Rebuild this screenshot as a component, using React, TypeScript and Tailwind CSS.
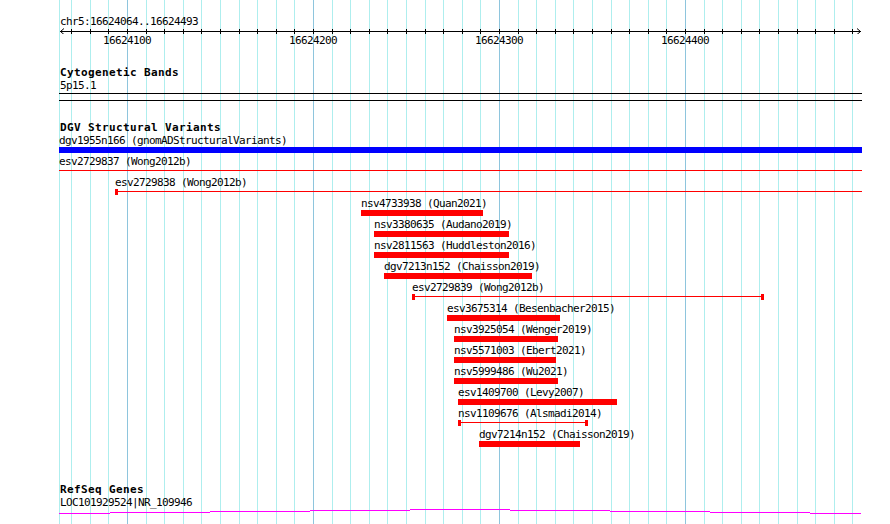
import React from 'react';

// genome coords -> screen px (100 bp = 186 px)
const BP0 = 16624100;
const PX_PER_BP = 1.86;
const xOf = (bp: number) => Math.floor(127.5 + (bp - BP0) * PX_PER_BP);

const gridBps: number[] = [];
for (let bp = 16624070; bp <= 16624490; bp += 10) gridBps.push(bp);

const tickLabels = [16624100, 16624200, 16624300, 16624400];

type Feature = {
  label: string;
  x1: number;
  x2: number;
  kind: 'bar' | 'line';
  color?: string;
  capL?: boolean;
  capR?: boolean;
};

const features: Feature[] = [
  { label: 'dgv1955n166 (gnomADStructuralVariants)', x1: 59, x2: 862, kind: 'bar', color: '#0000ff' },
  { label: 'esv2729837 (Wong2012b)', x1: 59, x2: 862, kind: 'line' },
  { label: 'esv2729838 (Wong2012b)', x1: 115, x2: 862, kind: 'line', capL: true },
  { label: 'nsv4733938 (Quan2021)', x1: 361, x2: 483, kind: 'bar' },
  { label: 'nsv3380635 (Audano2019)', x1: 374, x2: 509, kind: 'bar' },
  { label: 'nsv2811563 (Huddleston2016)', x1: 374, x2: 509, kind: 'bar' },
  { label: 'dgv7213n152 (Chaisson2019)', x1: 384, x2: 532, kind: 'bar' },
  { label: 'esv2729839 (Wong2012b)', x1: 412, x2: 764, kind: 'line', capL: true, capR: true },
  { label: 'esv3675314 (Besenbacher2015)', x1: 447, x2: 560, kind: 'bar' },
  { label: 'nsv3925054 (Wenger2019)', x1: 454, x2: 558, kind: 'bar' },
  { label: 'nsv5571003 (Ebert2021)', x1: 454, x2: 556, kind: 'bar' },
  { label: 'nsv5999486 (Wu2021)', x1: 454, x2: 558, kind: 'bar' },
  { label: 'esv1409700 (Levy2007)', x1: 458, x2: 617, kind: 'bar' },
  { label: 'nsv1109676 (Alsmadi2014)', x1: 458, x2: 588, kind: 'line', capL: true, capR: true },
  { label: 'dgv7214n152 (Chaisson2019)', x1: 479, x2: 580, kind: 'bar' },
];

// transcript connector, drawn in 100px steps like the original GD image
const geneSegs: [number, number, number][] = [
  [59, 110, 4], [110, 210, 3], [210, 310, 2], [310, 410, 1], [410, 510, 0],
  [510, 610, 1], [610, 710, 2], [710, 810, 3], [810, 861, 4],
];

const small = 'h-[13px] leading-[13px] text-[11px] tracking-[-0.62px] whitespace-nowrap';
const bold = 'h-[13px] leading-[13px] text-[11px] font-bold tracking-[0.38px] whitespace-nowrap';

const FeatureRow: React.FC<{ f: Feature }> = ({ f }) => {
  const red = '#ff0000';
  return (
    <div className="relative h-[21px]">
      <div className={`absolute top-0 ${small}`} style={{ left: f.x1 }}>
        {f.label}
      </div>
      {f.kind === 'bar' ? (
        <div
          className="absolute top-[13px] h-[6px]"
          style={{ left: f.x1, width: f.x2 - f.x1, background: f.color ?? red }}
        />
      ) : (
        <>
          <div className="absolute top-[15px] h-px bg-[#ff0000]" style={{ left: f.x1, width: f.x2 - f.x1 }} />
          {f.capL && <div className="absolute top-[13px] h-[6px] w-[3px] bg-[#ff0000]" style={{ left: f.x1 }} />}
          {f.capR && <div className="absolute top-[13px] h-[6px] w-[3px] bg-[#ff0000]" style={{ left: f.x2 - 3 }} />}
        </>
      )}
    </div>
  );
};

export default function App() {
  return (
    <div className="relative w-[890px] h-[524px] overflow-hidden bg-white text-black font-['DejaVu_Sans_Mono','Liberation_Mono',monospace]">
      {/* grid */}
      <svg className="absolute inset-0" width={890} height={524} shapeRendering="crispEdges">
        <rect x={59} y={0} width={1} height={524} fill="#aeeeee" />
        {gridBps.map((bp) => (
          <rect
            key={bp}
            x={xOf(bp)}
            y={0}
            width={1}
            height={524}
            fill={bp % 100 === 0 ? '#8ec5dd' : '#aeeeee'}
          />
        ))}
      </svg>

      <div className="relative flex flex-col">
        {/* ruler */}
        <div className={`mt-[15px] pl-[60px] ${small}`}>chr5:16624064..16624493</div>
        <svg className="block ml-[59px]" width={803} height={6} shapeRendering="crispEdges">
          <rect x={1} y={3} width={801} height={1} fill="#000" />
          {gridBps.map((bp) => (
            <rect key={bp} x={xOf(bp) - 59} y={1} width={1} height={5} fill="#000" />
          ))}
          <polyline points="5,0.5 1.5,3.5 5,6.5" fill="none" stroke="#000" strokeWidth={1} shapeRendering="auto" />
          <polyline points="798,0.5 801.5,3.5 798,6.5" fill="none" stroke="#000" strokeWidth={1} shapeRendering="auto" />
        </svg>
        <div className="relative h-[13px]">
          {tickLabels.map((bp) => (
            <div key={bp} className={`absolute top-0 ${small}`} style={{ left: xOf(bp) - 24 }}>
              {bp}
            </div>
          ))}
        </div>

        {/* cytogenetic bands */}
        <div className={`mt-[19px] pl-[60px] ${bold}`}>Cytogenetic Bands</div>
        <div className={`pl-[60px] ${small}`}>5p15.1</div>
        <div className="mt-px ml-[59px] w-[803px] h-[8px] border-y border-black" />

        {/* DGV */}
        <div className={`mt-[20px] pl-[60px] ${bold}`}>DGV Structural Variants</div>
        <div className="flex flex-col">
          {features.map((f) => (
            <FeatureRow key={f.label} f={f} />
          ))}
        </div>

        {/* RefSeq */}
        <div className={`mt-[34px] pl-[60px] ${bold}`}>RefSeq Genes</div>
        <div className={`pl-[60px] ${small}`}>LOC101929524|NR_109946</div>
        <svg className="block" width={890} height={5} shapeRendering="crispEdges">
          {geneSegs.map(([a, b, y]) => (
            <rect key={a} x={a} y={y} width={b - a} height={1} fill="#ff00ff" />
          ))}
        </svg>
      </div>
    </div>
  );
}
